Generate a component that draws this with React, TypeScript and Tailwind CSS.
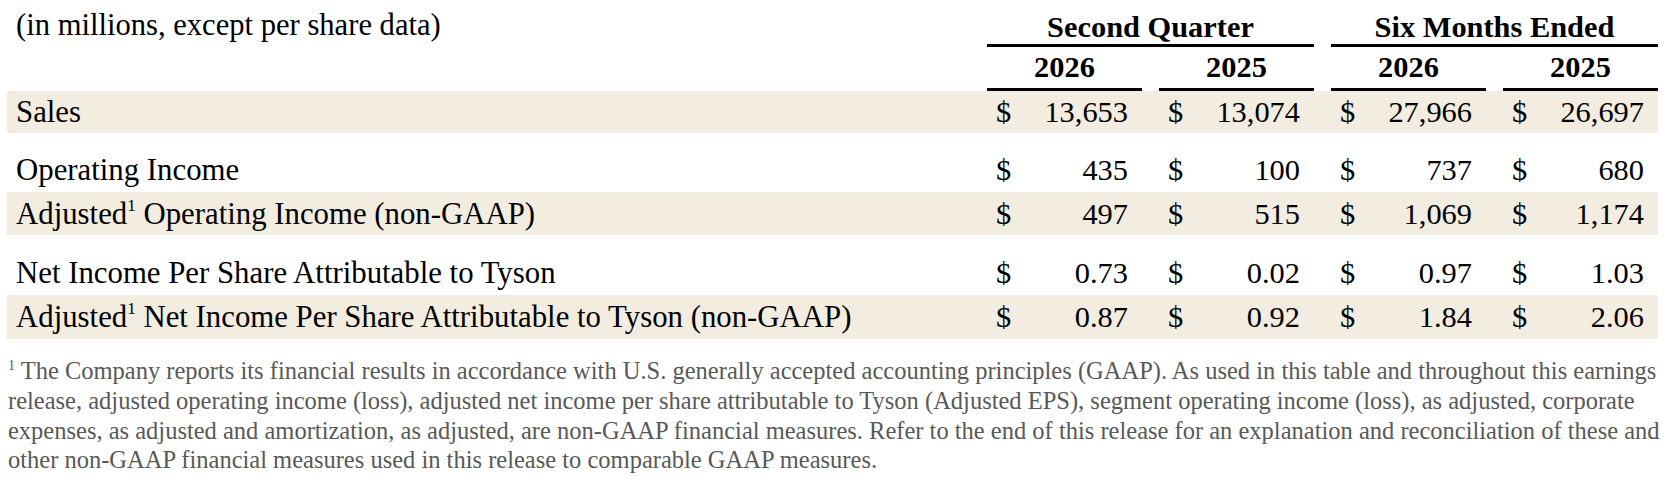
import React from 'react';

type Row = {
  label: React.ReactNode;
  values: [string, string, string, string];
  shaded?: boolean;
  height: string;
};

const Sup: React.FC = () => (
  <sup className="relative -top-[13px] align-baseline text-[17px] leading-none">1</sup>
);

// grouped rows, a blank gap sits between each group
const GROUPS: Row[][] = [
  [
    {
      label: 'Sales',
      values: ['13,653', '13,074', '27,966', '26,697'],
      shaded: true,
      height: 'h-[42px]',
    },
  ],
  [
    {
      label: 'Operating Income',
      values: ['435', '100', '737', '680'],
      height: 'h-[44px]',
    },
    {
      label: (
        <>
          Adjusted<Sup /> Operating Income (non-GAAP)
        </>
      ),
      values: ['497', '515', '1,069', '1,174'],
      shaded: true,
      height: 'h-[43px]',
    },
  ],
  [
    {
      label: 'Net Income Per Share Attributable to Tyson',
      values: ['0.73', '0.02', '0.97', '1.03'],
      height: 'h-[44px]',
    },
    {
      label: (
        <>
          Adjusted<Sup /> Net Income Per Share Attributable to Tyson (non-GAAP)
        </>
      ),
      values: ['0.87', '0.92', '1.84', '2.06'],
      shaded: true,
      height: 'h-[44px]',
    },
  ],
];

const GRID = 'grid grid-cols-[1fr_155px_155px_155px_155px] gap-x-[17px]';

const DataRow: React.FC<{ row: Row }> = ({ row }) => (
  <div className={`${GRID} ${row.height} ${row.shaded ? 'bg-[#f2ece1]' : ''}`}>
    <div className="flex items-center pl-[9px] text-[30.8px] leading-[34px] whitespace-nowrap">
      <span>{row.label}</span>
    </div>
    {row.values.map((v, i) => (
      <div key={i} className="flex items-center justify-between pl-[9px] pr-[14px] leading-[34px]">
        <span>$</span>
        <span>{v}</span>
      </div>
    ))}
  </div>
);

export default function App() {
  return (
    <div
      className="w-[1668px] h-[494px] overflow-hidden bg-white text-black"
      style={{ fontFamily: '"Liberation Serif", "Times New Roman", serif' }}
    >
      <div className="pl-[7px] pr-[10px] text-[30.4px]">
        {/* ── Header: period groups, then years ── */}
        <div className={GRID}>
          <div className="pl-[9px] pt-[8px] text-[30.6px] leading-[34px]">
            (in millions, except per share data)
          </div>
          <div className="col-span-2 border-b-[3px] border-black pt-[10px] text-center font-bold leading-[34px]">
            Second Quarter
          </div>
          <div className="col-span-2 border-b-[3px] border-black pt-[10px] text-center font-bold leading-[34px]">
            Six Months Ended
          </div>
        </div>
        <div className={GRID}>
          <div />
          {['2026', '2025', '2026', '2025'].map((y, i) => (
            <div
              key={i}
              className="border-b-[3px] border-black pt-[3px] pb-[4px] text-center font-bold leading-[34px]"
            >
              {y}
            </div>
          ))}
        </div>

        {/* ── Body ── */}
        {GROUPS.map((group, gi) => (
          <div key={gi} className={gi === 0 ? '' : gi === 1 ? 'mt-[15px]' : 'mt-[16px]'}>
            {group.map((row, ri) => (
              <DataRow key={ri} row={row} />
            ))}
          </div>
        ))}
      </div>

      {/* ── Footnote ── */}
      <p className="mt-[17px] pl-[8px] pr-[2px] text-[24.5px] leading-[29.8px] text-[#585858]">
        <sup className="relative -top-[9px] align-baseline text-[14px] leading-none">1</sup> The Company
        reports its financial results in accordance with U.S. generally accepted accounting principles
        (GAAP). As used in this table and throughout this earnings release, adjusted operating income
        (loss), adjusted net income per share attributable to Tyson (Adjusted EPS), segment operating
        income (loss), as adjusted, corporate expenses, as adjusted and amortization, as adjusted, are
        non-GAAP financial measures. Refer to the end of this release for an explanation and
        reconciliation of these and other non-GAAP financial measures used in this release to comparable
        GAAP measures.
      </p>
    </div>
  );
}
